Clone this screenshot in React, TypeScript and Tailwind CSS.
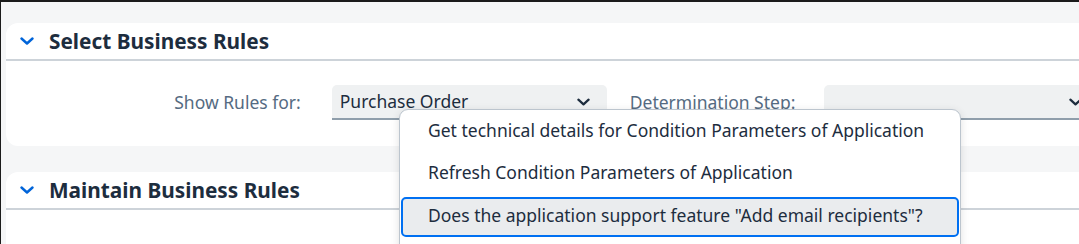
import React from 'react'

function Chevron({ className }: { className?: string }) {
    return (
        <svg viewBox="0 0 14 8" className={className} fill="none">
            <path d="M1.5 1.5 L7 6.5 L12.5 1.5" stroke="currentColor" strokeWidth="2.4" strokeLinecap="round" strokeLinejoin="round" />
        </svg>
    )
}

function PanelHeader({ title }: { title: string }) {
    return (
        <div className="h-[38px] flex items-center border-b-2 border-[#cdd3d9]">
            <Chevron className="ml-[14px] w-[14px] h-[8px] text-[#0064d9]" />
            <h2 className="ml-[15px] text-[20.8px] font-bold text-[#1d2d3e] leading-none">{title}</h2>
        </div>
    )
}

function SelectBox({ value, width }: { value: string; width: string }) {
    return (
        <div className={`${width} h-[35px] bg-[#eff1f2] rounded-t-[5px] border-b-2 border-[#8f9eab] flex items-center justify-between pl-[8px] pr-[17px]`}>
            <span className="text-[17.5px] text-[#1d2d3e]">{value}</span>
            <Chevron className="w-[13px] h-[8px] text-[#1d2d3e]" />
        </div>
    )
}

const items = [
    'Get technical details for Condition Parameters of Application',
    'Refresh Condition Parameters of Application',
    'Does the application support feature "Add email recipients"?',
]

export default function App() {
    return (
        <div className="relative w-[1079px] h-[244px] overflow-hidden bg-[#f5f6f7] border-t-2 border-l border-[#1b1b1b]" style={{ fontFamily: '"Noto Sans", "Open Sans", sans-serif' }}>
            <section className="mt-[21px] ml-[5px] mr-[-20px] h-[123px] bg-white rounded-[12px]">
                <PanelHeader title="Select Business Rules" />
                <div className="flex items-center pt-[24px]">
                    <label className="w-[296px] text-right text-[17.5px] text-[#556b82]">Show Rules for:</label>
                    <div className="ml-[31px]">
                        <SelectBox value="Purchase Order" width="w-[275px]" />
                    </div>
                    <label className="ml-[23px] w-[180px] text-[17.5px] text-[#556b82]">Determination Step:</label>
                    <div className="ml-[15px]">
                        <SelectBox value="" width="w-[275px]" />
                    </div>
                </div>
            </section>
            <section className="mt-[26px] ml-[5px] mr-[-20px] h-[100px] bg-white rounded-[12px]">
                <PanelHeader title="Maintain Business Rules" />
            </section>

            <div className="absolute left-[398px] top-[107px] w-[562px] h-[160px] bg-white border border-[#bcc5ce] rounded-[9px] shadow-[0_2px_8px_rgba(0,0,0,0.12)] px-[1px]">
                {items.map((t, i) => (
                    <div
                        key={t}
                        className={
                            i === 2
                                ? 'h-[40px] mt-[4px] flex items-center pl-[25px] pb-[3px] rounded-[5px] border-2 border-[#0070f2] bg-[#eaecee] text-[17.5px] text-[#1d2d3e]'
                                : i === 0
                                    ? 'h-[41px] flex items-center pl-[27px] text-[17.5px] text-[#1d2d3e]'
                                    : 'h-[42px] flex items-center pl-[27px] text-[17.5px] text-[#1d2d3e]'
                        }
                    >
                        {t}
                    </div>
                ))}
            </div>
        </div>
    )
}
